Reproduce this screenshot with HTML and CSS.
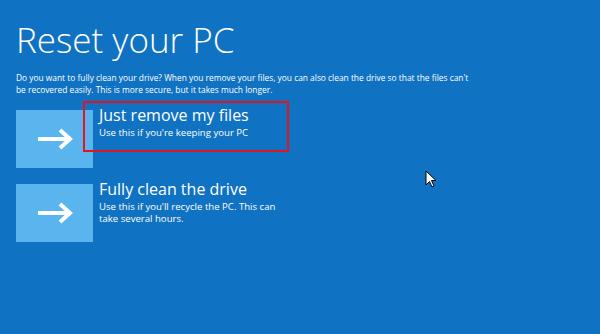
FILE: index.html
```html
<!DOCTYPE html>
<html lang="en">
<head>
    <meta charset="UTF-8">
    <title>Reset your PC</title>
    <link rel="stylesheet" href="styles.css">
</head>
<body>

    <div class="screen">
        <h1>Reset your PC</h1>
        <p class="intro">Do you want to fully clean your drive? When you remove your files, you can also clean the drive so that the files can't<br>be recovered easily. This is more secure, but it takes much longer.</p>

        <div class="options">
            <div class="option">
                <div class="tile">
                    <svg width="38" height="22" viewBox="0 0 38 22"><path d="M2 11H34M24 2L34 11L24 20" fill="none" stroke="#fff" stroke-width="4"/></svg>
                </div>
                <div class="option-text">
                    <span class="option-title">Just remove my files</span>
                    <span class="option-desc">Use this if you're keeping your PC</span>
                </div>
                <div class="highlight"></div>
            </div>
            <div class="option">
                <div class="tile">
                    <svg width="38" height="22" viewBox="0 0 38 22"><path d="M2 11H34M24 2L34 11L24 20" fill="none" stroke="#fff" stroke-width="4"/></svg>
                </div>
                <div class="option-text">
                    <span class="option-title">Fully clean the drive</span>
                    <span class="option-desc">Use this if you'll recycle the PC. This can take several hours.</span>
                </div>
            </div>
        </div>

        <svg class="cursor" width="12" height="18" viewBox="0 0 12 18"><path d="M1 1V15L4.5 11.5L7 17L9 16L6.5 10.5H11Z" fill="#fff" stroke="#000" stroke-width="1"/></svg>
    </div>

</body>
</html>
```

FILE: styles.css
```css
body {
    margin: 0;
    padding: 0;
    background-color: #0f72c2;
    font-family: 'Open Sans', sans-serif;
    color: white;
}

.screen {
    position: relative;
    width: 600px;
    height: 334px;
    padding: 18px 0 0 16px;
    box-sizing: border-box;
}

h1 {
    margin: 0;
    font-size: 35px;
    font-weight: 300;
    line-height: 44px;
}

.intro {
    width: 470px;
    margin: 10px 0 0 0;
    font-size: 8.4px;
    line-height: 12px;
}

.options {
    display: flex;
    flex-direction: column;
    gap: 16px;
    margin-top: 14px;
}

.option {
    position: relative;
    display: flex;
    gap: 6px;
}

.tile {
    width: 77px;
    height: 58px;
    background-color: #5ab4ee;
    display: flex;
    align-items: center;
    justify-content: center;
}

.option-text {
    display: flex;
    flex-direction: column;
    gap: 2px;
    width: 190px;
    margin-top: -5px;
}

.option-title {
    font-size: 16px;
    line-height: 20px;
}

.option-desc {
    font-size: 9.6px;
    line-height: 12px;
}

.highlight {
    position: absolute;
    left: 67px;
    top: -9px;
    width: 202px;
    height: 47px;
    border: 2px solid #e5131f;
}

.cursor {
    position: absolute;
    left: 425px;
    top: 170px;
}
```
